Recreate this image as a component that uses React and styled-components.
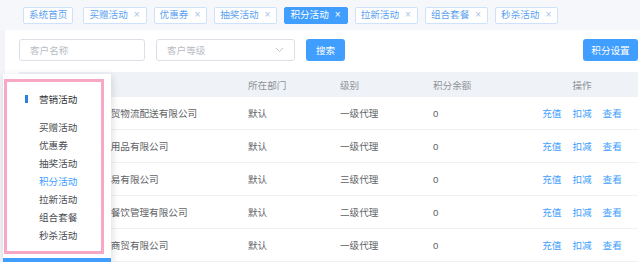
import React from "react";
import styled, { createGlobalStyle } from "styled-components";

const Global = createGlobalStyle`
  html, body { margin: 0; padding: 0; }
  body {
    background: #f2f4f7;
    font-family: "Liberation Sans", "Noto Sans CJK SC", sans-serif;
    -webkit-font-smoothing: antialiased;
  }
`;

const Page = styled.div`
  position: relative;
  width: 640px;
  height: 262px;
  overflow: hidden;
  background: #f2f4f7;
`;

const TagsBar = styled.div`
  display: flex;
  align-items: center;
  gap: 7px;
  height: 30px;
  padding-left: 23px;
  box-sizing: border-box;
  background: #f5f7fa;
`;

const Tag = styled.div`
  display: flex;
  align-items: center;
  gap: 6px;
  height: 17px;
  padding: 0 ${(p) => (p.$closable ? "6px" : "5px")} 0 5px;
  box-sizing: border-box;
  border: 1px solid ${(p) => (p.$active ? "#409eff" : "#cfe2fb")};
  border-radius: 2px;
  background: ${(p) => (p.$active ? "#409eff" : "#ffffff")};
  color: ${(p) => (p.$active ? "#ffffff" : "#5b9ff0")};
  font-size: 9.6px;
  line-height: 1;
  margin-right: ${(p) => (p.$first ? "3px" : "0")};
`;

const Close = styled.span`
  font-size: 10px;
  color: ${(p) => (p.$active ? "#ffffff" : "#a9c3e6")};
`;

const Panel = styled.div`
  margin-left: 5px;
  background: #ffffff;
  padding: 9px 2px 0 14px;
  height: 232px;
  box-sizing: border-box;
`;

const SearchRow = styled.div`
  display: flex;
  align-items: center;
  height: 22px;
`;

const Input = styled.div`
  display: flex;
  align-items: center;
  justify-content: space-between;
  width: ${(p) => p.$w}px;
  height: 22px;
  box-sizing: border-box;
  border: 1px solid #dcdfe6;
  border-radius: 3px;
  padding: 0 10px;
  margin-right: ${(p) => p.$mr || 0}px;
  color: #b8bcc4;
  font-size: 9.6px;
`;

const Button = styled.div`
  display: flex;
  align-items: center;
  justify-content: center;
  width: ${(p) => p.$w}px;
  height: 22px;
  border-radius: 3px;
  background: #409eff;
  color: #ffffff;
  font-size: 9.6px;
  margin-left: ${(p) => (p.$push ? "auto" : "0")};
`;

const Table = styled.div`
  margin-top: 11px;
  display: grid;
  grid-template-columns: 229px 92px 93px 100px 1fr;
`;

const HeadCell = styled.div`
  height: 25px;
  display: flex;
  align-items: center;
  justify-content: ${(p) => (p.$center ? "center" : "flex-start")};
  padding-left: ${(p) => p.$pl || 0}px;
  padding-right: ${(p) => (p.$center ? 7 : 0)}px;
  background: #eff2f6;
  color: #909399;
  font-size: 9.6px;
`;

const Cell = styled.div`
  height: 33px;
  display: flex;
  align-items: center;
  justify-content: ${(p) => (p.$center ? "center" : "flex-start")};
  gap: 11px;
  padding-left: ${(p) => p.$pl || 0}px;
  padding-right: ${(p) => (p.$center ? 7 : 0)}px;
  border-bottom: 1px solid #eef0f5;
  box-sizing: border-box;
  color: #606266;
  font-size: 9.6px;
  white-space: nowrap;
  overflow: hidden;
`;

const Link = styled.span`
  color: #409eff;
`;

const Popup = styled.div`
  position: absolute;
  left: 3px;
  top: 74px;
  width: 108px;
  height: 188px;
  background: #ffffff;
  box-shadow: 1px 2px 8px rgba(0, 0, 0, 0.14);
  display: flex;
  flex-direction: column;
  padding: 5px 0 0 1px;
  box-sizing: border-box;
`;

const PinkBox = styled.div`
  width: 100px;
  height: 175px;
  box-sizing: border-box;
  border: 3px solid #f6a8c4;
  padding-top: 8px;
`;

const MenuTitle = styled.div`
  display: flex;
  align-items: center;
  gap: 11px;
  height: 18px;
  padding-left: 18px;
  color: #303133;
  font-size: 9.6px;
`;

const Mark = styled.span`
  width: 3px;
  height: 8px;
  background: #2f7fe0;
`;

const MenuList = styled.div`
  margin-top: 11px;
  display: flex;
  flex-direction: column;
`;

const MenuItem = styled.div`
  height: 18px;
  line-height: 18px;
  padding-left: 32px;
  font-size: 9.6px;
  color: ${(p) => (p.$active ? "#409eff" : "#4a4d52")};
`;

const BlueStrip = styled.div`
  margin-top: auto;
  margin-left: -1px;
  height: 4px;
  background: #409eff;
`;

const tags = [
  { t: "系统首页", close: false },
  { t: "买赠活动", close: true },
  { t: "优惠券", close: true },
  { t: "抽奖活动", close: true },
  { t: "积分活动", close: true, active: true },
  { t: "拉新活动", close: true },
  { t: "组合套餐", close: true },
  { t: "秒杀活动", close: true },
];

const rows = [
  { name: "深圳市华远国际商贸物流配送有限公司", dept: "默认", level: "一级代理" },
  { name: "广州明辉日常生活用品有限公司", dept: "默认", level: "一级代理" },
  { name: "杭州恒通进出口贸易有限公司", dept: "默认", level: "三级代理" },
  { name: "北京市味之源连锁餐饮管理有限公司", dept: "默认", level: "二级代理" },
  { name: "成都锦华百货综合商贸有限公司", dept: "默认", level: "一级代理" },
];

const menu = ["买赠活动", "优惠券", "抽奖活动", "积分活动", "拉新活动", "组合套餐", "秒杀活动"];

function Chevron() {
  return (
    <svg width="9" height="6" viewBox="0 0 9 6" fill="none">
      <path d="M1 1l3.5 3.5L8 1" stroke="#c0c4cc" strokeWidth="1" />
    </svg>
  );
}

export default function App() {
  return (
    <Page>
      <Global />
      <TagsBar>
        {tags.map((g, i) => (
          <Tag key={g.t} $active={g.active} $first={i === 0} $closable={g.close}>
            {g.t}
            {g.close && <Close $active={g.active}>×</Close>}
          </Tag>
        ))}
      </TagsBar>
      <Panel>
        <SearchRow>
          <Input $w={126} $mr={11}>客户名称</Input>
          <Input $w={139} $mr={11}>
            客户等级
            <Chevron />
          </Input>
          <Button $w={39}>搜索</Button>
          <Button $w={55} $push>积分设置</Button>
        </SearchRow>
        <Table>
          <HeadCell $pl={15}>客户名称</HeadCell>
          <HeadCell>所在部门</HeadCell>
          <HeadCell>级别</HeadCell>
          <HeadCell>积分余额</HeadCell>
          <HeadCell $center>操作</HeadCell>
          {rows.map((r) => (
            <React.Fragment key={r.name}>
              <Cell $pl={15}>{r.name}</Cell>
              <Cell>{r.dept}</Cell>
              <Cell>{r.level}</Cell>
              <Cell>0</Cell>
              <Cell $center>
                <Link>充值</Link>
                <Link>扣减</Link>
                <Link>查看</Link>
              </Cell>
            </React.Fragment>
          ))}
        </Table>
      </Panel>
      <Popup>
        <PinkBox>
          <MenuTitle>
            <Mark />
            营销活动
          </MenuTitle>
          <MenuList>
            {menu.map((m) => (
              <MenuItem key={m} $active={m === "积分活动"}>
                {m}
              </MenuItem>
            ))}
          </MenuList>
        </PinkBox>
        <BlueStrip />
      </Popup>
    </Page>
  );
}
